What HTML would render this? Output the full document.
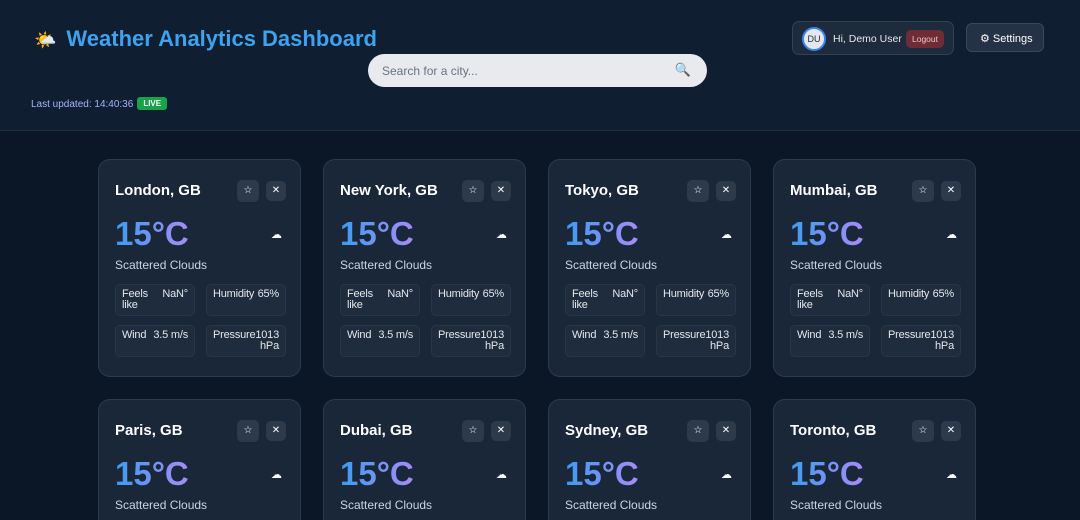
<!DOCTYPE html>
<html><head><meta charset="utf-8"><style>
*{box-sizing:border-box;margin:0;padding:0}
html,body{width:1080px;height:520px;overflow:hidden}
body{background:#0b1727;font-family:"Liberation Sans",sans-serif;color:#e5e7eb;position:relative}
#wrap{position:absolute;left:0;top:0;width:1080px;height:520px;overflow:hidden}
.hdr{position:absolute;left:0;top:0;width:1080px;height:131px;background:#0f1e31;border-bottom:1px solid #1c2b3e}
.title{position:absolute;left:34px;top:26px;font-size:22px;font-weight:bold;color:#3ea2ef}
.title span{font-size:18px;margin-right:10px}
.upd{position:absolute;left:31px;top:97px;font-size:10px;color:#a5b4fc}
.live{display:inline-block;background:#16a34a;color:#fff;font-size:8px;font-weight:bold;padding:2px 6px;border-radius:3px;margin-left:4px;vertical-align:1px}
.search{position:absolute;left:368px;top:54px;width:339px;height:33px;border-radius:17px;background:#e8eaed;color:#6b7280;font-size:12px;padding:10px 14px}
.search i{position:absolute;right:16px;top:8px;font-style:normal;font-size:13px}
.user{position:absolute;left:792px;top:21px;width:162px;height:34px;border-radius:7px;background:#1e2b3c;border:1px solid #334155}
.av{position:absolute;left:9px;top:5px;width:24px;height:24px;border-radius:50%;background:#e5e7eb;border:2px solid #3b82f6;color:#1e293b;font-size:9px;text-align:center;line-height:20px}
.hi{position:absolute;left:40px;top:11px;font-size:10.5px;color:#e5e7eb;white-space:nowrap}
.lo{position:absolute;left:113px;top:8px;background:#6e2d36;color:#f3c1c5;font-size:8.5px;padding:4px 6px;border-radius:5px}
.set{position:absolute;left:966px;top:23px;width:78px;height:29px;border-radius:6px;background:#253245;border:1px solid #3a475a;font-size:11px;color:#fff;padding:8px 0 0 13px}
.card{position:absolute;width:203px;height:218px;border-radius:12px;background:#1a2739;border:1px solid #2b3a4e}
.card h3{position:absolute;left:16px;top:22px;font-size:15px;color:#fff}
.b{position:absolute;width:22px;height:22px;border-radius:5px;background:#2c3a4c;color:#fff;font-size:10px;text-align:center;line-height:22px}
.t{position:absolute;left:16px;top:55px;font-size:33px;font-weight:bold;background:linear-gradient(90deg,#3b9cf0,#a78bfa);-webkit-background-clip:text;color:transparent}
.cl{position:absolute;left:172px;top:68px;color:#fff;font-size:11px}
.d{position:absolute;left:16px;top:98px;font-size:12px;color:#cbd5e1}
.m{position:absolute;width:80px;height:32px;border-radius:5px;background:#1e2c3e;border:1px solid #27364a;font-size:11px;color:#e5e7eb;padding:4px 6px;line-height:11px;letter-spacing:-0.2px}
.m b{font-weight:normal;position:absolute;right:6px;top:4px;text-align:right}
</style></head><body><div id="wrap">
<div class="hdr">
<div class="title"><span>🌤️</span>Weather Analytics Dashboard</div>
<div class="search">Search for a city...<i>🔍</i></div>
<div class="upd">Last updated: 14:40:36<span class="live">LIVE</span></div>
<div class="user"><div class="av">DU</div><div class="hi">Hi, Demo User</div><div class="lo">Logout</div></div>
<div class="set">⚙ Settings</div>
</div>
<div id="cards"></div>
</div>
<script>
const names=["London, GB","New York, GB","Tokyo, GB","Mumbai, GB","Paris, GB","Dubai, GB","Sydney, GB","Toronto, GB"];
let h="";
names.forEach((n,i)=>{const x=98+(i%4)*225,y=i<4?159:399;
h+=`<div class="card" style="left:${x}px;top:${y}px"><h3>${n}</h3><div class="b" style="left:138px;top:20px">☆</div><div class="b" style="left:167px;top:21px;width:20px;height:20px;line-height:20px">✕</div><div class="t">15°C</div><div class="cl">☁</div><div class="d">Scattered Clouds</div>
<div class="m" style="left:16px;top:124px">Feels<br>like<b>NaN°</b></div>
<div class="m" style="left:107px;top:124px">Humidity<b>65%</b></div>
<div class="m" style="left:16px;top:165px">Wind<b>3.5 m/s</b></div>
<div class="m" style="left:107px;top:165px">Pressure<b>1013<br>hPa</b></div></div>`});
document.getElementById("cards").innerHTML=h;
</script>
</body></html>
